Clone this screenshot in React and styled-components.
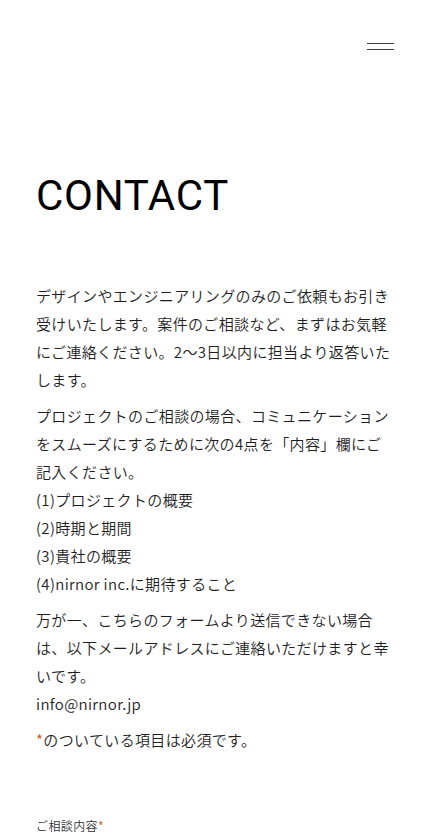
import React from "react";
import styled, { createGlobalStyle } from "styled-components";

const GlobalStyle = createGlobalStyle`
  body {
    margin: 0;
    background: #fff;
    -webkit-font-smoothing: antialiased;
  }
  * {
    box-sizing: border-box;
  }
`;

const Header = styled.header`
  display: flex;
  justify-content: flex-end;
  padding: 43px 34px 0 0;
`;

const MenuButton = styled.button`
  display: flex;
  flex-direction: column;
  gap: 5px;
  width: 27px;
  padding: 0;
  border: 0;
  background: none;
  cursor: pointer;

  span {
    display: block;
    width: 100%;
    height: 1px;
    background-color: #3a3a3a;
  }
`;

const Main = styled.main`
  padding: 0 36px;
  font-family: "Noto Sans CJK JP", "Noto Sans", sans-serif;
  font-weight: 350;
  color: #1e1e1e;
`;

const Title = styled.h1`
  margin: 125px 0 65px;
  font-family: Roboto, "Liberation Sans", sans-serif;
  font-size: 42px;
  font-weight: 400;
  letter-spacing: 0.7px;
  line-height: 1;
  color: #000;
`;

const Text = styled.p`
  margin: 0;
  font-size: 15px;
  line-height: 28px;
  letter-spacing: 0.35px;

  & + & {
    margin-top: 8px;
  }
`;

const Required = styled.span`
  color: #c4652f;
  font-weight: 400;
`;

const Form = styled.form`
  margin-top: 63px;
`;

const Field = styled.div`
  display: flex;
  flex-direction: column;
  gap: 10px;
`;

const Label = styled.label`
  font-size: 12px;
  line-height: 18px;
  letter-spacing: 0.4px;
  color: #333;
`;

const TextArea = styled.textarea`
  width: 100%;
  height: 160px;
  border: 1px solid #ccc;
  font: inherit;
`;

function App() {
  return (
    <>
      <GlobalStyle />
      <Header>
        <MenuButton aria-label="menu">
          <span />
          <span />
        </MenuButton>
      </Header>
      <Main>
        <Title>CONTACT</Title>
        <Text>
          デザインやエンジニアリングのみのご依頼もお引き受けいたします。案件のご相談など、まずはお気軽にご連絡ください。2〜3日以内に担当より返答いたします。
        </Text>
        <Text>
          プロジェクトのご相談の場合、コミュニケーションをスムーズにするために次の4点を「内容」欄にご記入ください。
          <br />
          (1)プロジェクトの概要
          <br />
          (2)時期と期間
          <br />
          (3)貴社の概要
          <br />
          (4)nirnor inc.に期待すること
        </Text>
        <Text>
          万が一、こちらのフォームより送信できない場合は、以下メールアドレスにご連絡いただけますと幸いです。
          <br />
          info@nirnor.jp
        </Text>
        <Text>
          <Required>*</Required>のついている項目は必須です。
        </Text>
        <Form onSubmit={(e) => e.preventDefault()}>
          <Field>
            <Label htmlFor="message">
              ご相談内容<Required>*</Required>
            </Label>
            <TextArea id="message" />
          </Field>
        </Form>
      </Main>
    </>
  );
}

export default App;
